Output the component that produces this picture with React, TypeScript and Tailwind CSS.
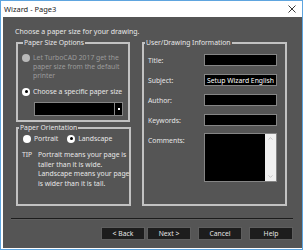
import { ChevronUp, ChevronDown } from "lucide-react";

const Radio = ({ checked, disabled }: { checked?: boolean; disabled?: boolean }) => (
  <span
    className={`flex h-[8px] w-[8px] shrink-0 items-center justify-center rounded-full ${
      disabled ? "bg-[#b9b9b9]" : "bg-white"
    }`}
  >
    {checked && <span className="h-[3px] w-[3px] rounded-full bg-black" />}
  </span>
);

const Field = ({ label, value }: { label: string; value?: string }) => (
  <div className="flex h-[12px] items-center">
    <span className="w-[56px]">{label}</span>
    <div className="flex h-[12px] w-[73px] items-center overflow-hidden whitespace-nowrap border border-[#858585] bg-black pl-[2px] text-white">
      {value}
    </div>
  </div>
);

const Button = ({ label }: { label: string }) => (
  <button className="flex h-[13px] w-[44px] items-center justify-center border border-[#5e5e5e] bg-[#1d1d1d] text-[#e4e4e4]">
    {label}
  </button>
);

export default function App() {
  return (
    <div className="flex h-[250px] w-[303px] flex-col border border-[#5ea5df] bg-white font-['Noto_Sans',sans-serif] text-[6.8px] leading-[9px]">
      {/* Title bar */}
      <div className="flex h-[16px] shrink-0 items-center justify-between pl-[3px] pr-[5px] text-[7.5px] text-[#1a1a1a]">
        <span>Wizard - Page3</span>
        <svg width="8" height="8" viewBox="0 0 8 8" className="mr-[1px]">
          <path d="M0.5 0.5 L7.5 7.5 M7.5 0.5 L0.5 7.5" stroke="#3a3a3a" strokeWidth="1" />
        </svg>
      </div>

      {/* Body */}
      <div className="ml-[2px] mb-[1px] flex flex-1 flex-col whitespace-nowrap bg-[#555555] text-[#e8e8e8]">
        <p className="pl-[12px] pt-[9px] text-[7px] leading-[11px]">Choose a paper size for your drawing.</p>

        <div className="flex gap-[12px] pl-[13px]">
          <div className="flex w-[114px] flex-col">
            <fieldset className="h-[85px] border-2 border-[#c2c2c2] pl-[4px]">
              <legend className="ml-[1px] px-[1px] leading-[12px]">Paper Size Options</legend>
              <div className="mt-[4px] flex gap-[3px] text-[#9c9c9c]">
                <span className="mt-[1px]">
                  <Radio disabled />
                </span>
                <span>
                  Let TurboCAD 2017 get the
                  <br />
                  paper size from the default
                  <br />
                  printer
                </span>
              </div>
              <div className="mt-[7px] flex items-center gap-[3px]">
                <Radio checked />
                <span>Choose a specific paper size</span>
              </div>
              <div className="ml-[12px] mt-[6px] flex h-[14px] w-[89px] border border-[#858585] bg-black">
                <div className="flex-1" />
                <div className="flex w-[8px] items-center justify-center border-l border-[#858585]">
                  <span className="h-[2px] w-[2px] bg-white" />
                </div>
              </div>
            </fieldset>

            <fieldset className="h-[84px] border-2 border-[#c2c2c2]">
              <legend className="ml-[1px] px-[1px] leading-[12px]">Paper Orientation</legend>
              <div className="flex items-center pl-[5px]">
                <Radio />
                <span className="ml-[3px]">Portrait</span>
                <span className="ml-[9px]">
                  <Radio checked />
                </span>
                <span className="ml-[3px]">Landscape</span>
              </div>
              <div className="mt-[7px] flex pl-[4px] leading-[9.5px]">
                <span className="w-[16px]">TIP</span>
                <span>
                  Portrait means your page is
                  <br />
                  taller than it is wide.
                  <br />
                  Landscape means your page
                  <br />
                  is wider than it is tall.
                </span>
              </div>
            </fieldset>
          </div>

          <fieldset className="h-[169px] w-[145px] border-2 border-[#c2c2c2] pl-[4px]">
            <legend className="ml-[-3px] px-[1px] leading-[12px]">User/Drawing Information</legend>
            <div className="mt-[5px] flex flex-col gap-[8px]">
              <Field label="Title:" />
              <Field label="Subject:" value="Setup Wizard English" />
              <Field label="Author:" />
              <Field label="Keywords:" />
            </div>
            <div className="mt-[7px] flex items-start">
              <span className="w-[56px] pt-[3px]">Comments:</span>
              <div className="flex h-[49px] w-[73px] border border-[#858585]">
                <div className="flex-1 bg-black" />
                <div className="flex w-[11px] flex-col items-center justify-between bg-[#f0f0f0] py-[1px] text-[#a8a8a8]">
                  <ChevronUp size={7} strokeWidth={2} />
                  <ChevronDown size={7} strokeWidth={2} />
                </div>
              </div>
            </div>
          </fieldset>
        </div>

        <div className="mx-[8px] mr-[9px] mt-[12px] border-t border-b border-t-[#1c1c1c] border-b-[#5f5f5f]" />

        <div className="mr-[9px] mt-[7px] flex justify-end">
          <Button label="< Back" />
          <span className="ml-[2px]">
            <Button label="Next >" />
          </span>
          <span className="ml-[7px]">
            <Button label="Cancel" />
          </span>
          <span className="ml-[7px]">
            <Button label="Help" />
          </span>
        </div>
      </div>
    </div>
  );
}
